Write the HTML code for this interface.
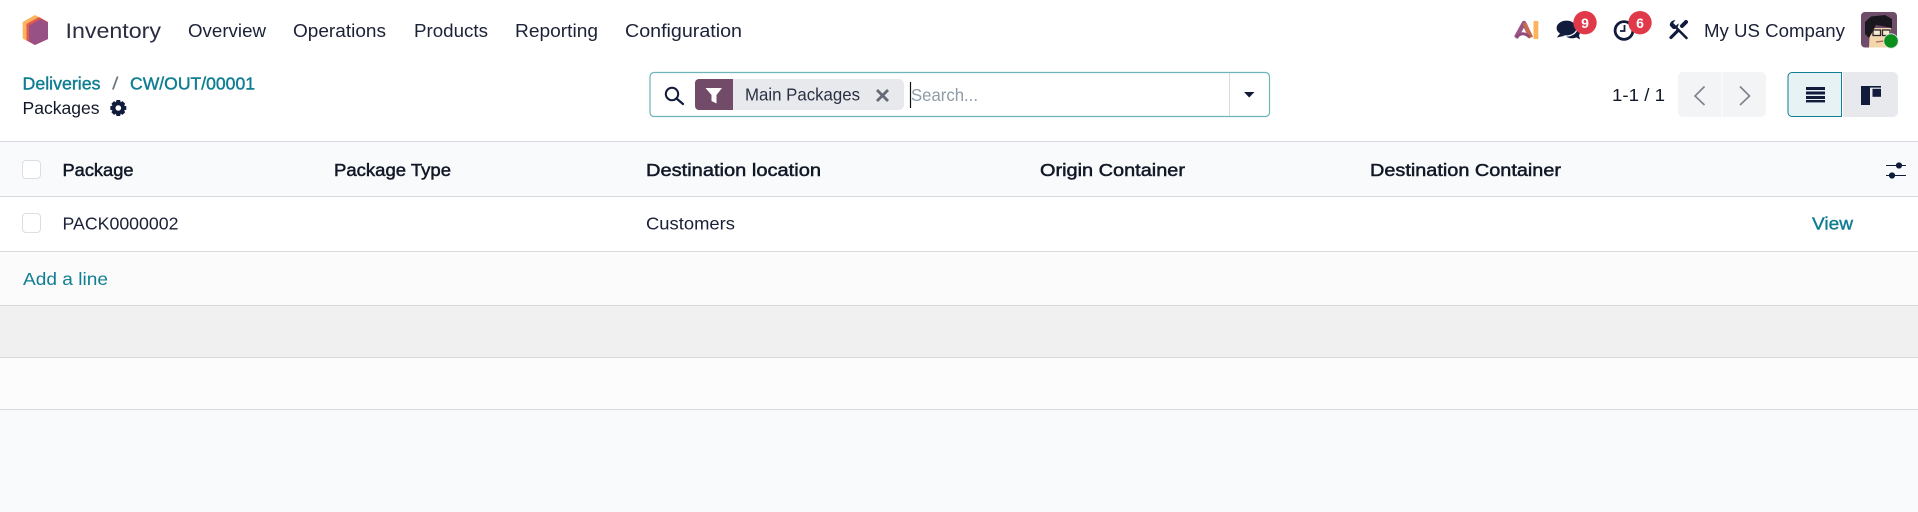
<!DOCTYPE html>
<html lang="en">
<head>
<meta charset="utf-8">
<title>Inventory - Packages</title>
<style>
html,body{margin:0;padding:0;width:1918px;height:512px;overflow:hidden;background:#f9fafb}
svg{display:block}
text{font-family:"Liberation Sans",sans-serif;fill:#1b2136;white-space:pre}
.nav{font-size:18.6px}
.b{font-size:17.6px;fill:#111827}
.th{font-size:17.8px;fill:#111827;stroke:#111827;stroke-width:.5px}
.lnk{font-size:17.6px;fill:#0f7d92;stroke:#0f7d92;stroke-width:.4px}
</style>
</head>
<body>
<svg width="1918" height="512" viewBox="0 0 1918 512" xmlns="http://www.w3.org/2000/svg">
<rect width="1918" height="512" fill="#f9fafb"/>
<rect width="1918" height="141" fill="#fff"/>

<!-- logo -->
<polygon points="35,15 48,22 48,39 35,45 22.7,38.5 22.7,22" fill="#fbb45c"/>
<polygon points="26.5,24 39,17 48,22 48,39 35,45 26.5,40.5" fill="#e2574f"/>
<polygon points="29,25.5 41,19 48,22.5 48,39 35,45 29,41.5" fill="#985184"/>

<!-- top nav -->
<text x="65.5" y="38" font-size="21.6" textLength="95.5" lengthAdjust="spacingAndGlyphs" style="fill:#2a2c3f">Inventory</text>
<text class="nav" x="188" y="37" textLength="78" lengthAdjust="spacingAndGlyphs">Overview</text>
<text class="nav" x="293" y="37" textLength="93" lengthAdjust="spacingAndGlyphs">Operations</text>
<text class="nav" x="414" y="37" textLength="74" lengthAdjust="spacingAndGlyphs">Products</text>
<text class="nav" x="515" y="37" textLength="83" lengthAdjust="spacingAndGlyphs">Reporting</text>
<text class="nav" x="625" y="37" textLength="117" lengthAdjust="spacingAndGlyphs">Configuration</text>

<!-- AI icon -->
<path d="M1516 37.5 L1524 23 L1531 37.5" fill="none" stroke="#9a5586" stroke-width="4.4" stroke-linejoin="round"/>
<path d="M1524.5 23 L1531 37.5" fill="none" stroke="#c96a4a" stroke-width="3.8"/>
<path d="M1516 38 Q1522 30 1529.5 37" fill="none" stroke="#8f4d7d" stroke-width="3"/>
<rect x="1533.5" y="21" width="4.8" height="18" fill="#fbb45c"/>

<!-- chat icon -->
<ellipse cx="1572" cy="32.5" rx="8" ry="5.8" fill="#111b3c"/>
<path d="M1574 36 L1580 39.5 L1578.5 33Z" fill="#111b3c"/>
<ellipse cx="1566.5" cy="28" rx="10.5" ry="8" fill="#111b3c" stroke="#fff" stroke-width="1.2"/>
<path d="M1560 33.5 L1556.8 37.5 L1565 35.8Z" fill="#111b3c"/>
<circle cx="1585" cy="22.7" r="11.7" fill="#e03a4a"/>
<text x="1585" y="28" font-size="14" font-weight="bold" text-anchor="middle" style="fill:#fff">9</text>

<!-- clock icon -->
<circle cx="1624" cy="30.5" r="8.9" fill="none" stroke="#111b3c" stroke-width="2.8"/>
<path d="M1624.5 25v6h-4.5" fill="none" stroke="#111b3c" stroke-width="1.8"/>
<circle cx="1640" cy="22.7" r="11.7" fill="#e03a4a"/>
<text x="1640" y="28" font-size="14" font-weight="bold" text-anchor="middle" style="fill:#fff">6</text>

<!-- tools icon -->
<path d="M1672.5 24 L1686.5 38" stroke="#111b3c" stroke-width="2.6" stroke-linecap="round"/>
<path d="M1669.8 25.5 A5 5 0 0 1 1675.5 20.3 L1672.8 23.3 L1673.5 25.5 L1675.5 26 L1678.5 23.4 A5 5 0 0 1 1673 29Z" fill="#111b3c"/>
<path d="M1671 37.5 L1678 30.5" stroke="#111b3c" stroke-width="3.2" stroke-linecap="round"/>
<path d="M1682 26 L1686 22" stroke="#111b3c" stroke-width="4" stroke-linecap="round"/>

<text class="nav" x="1704" y="37" textLength="141" lengthAdjust="spacingAndGlyphs">My US Company</text>

<!-- avatar -->
<rect x="1861" y="12" width="36" height="35.5" rx="4" fill="#6f4c6a"/>
<path d="M1869 47.5 L1870 28 L1891 28 L1891 47.5Z" fill="#f4d6ac"/>
<path d="M1865 34 L1865 22 L1871 16.5 L1885 15 L1892 19 L1892 28 L1887 27 L1876 25 L1873 31 L1869 38Z" fill="#1b171f"/>
<rect x="1873" y="30" width="7.5" height="5.5" fill="#f8ead2" stroke="#2c2a2e" stroke-width="1.3"/>
<rect x="1882.5" y="30" width="7.5" height="5.5" fill="#f8ead2" stroke="#2c2a2e" stroke-width="1.3"/>
<path d="M1876 42 L1884 41" stroke="#a8675a" stroke-width="1.2"/>
<circle cx="1891" cy="41" r="7.6" fill="#dfe3e8"/>
<circle cx="1891" cy="41" r="6.8" fill="#0a8f1c"/>

<!-- breadcrumb -->
<text class="lnk" x="22.5" y="89.5" textLength="78" lengthAdjust="spacingAndGlyphs">Deliveries</text>
<text x="112" y="89.5" font-size="17.6" textLength="6.5" lengthAdjust="spacingAndGlyphs" style="fill:#6b7280">/</text>
<text class="lnk" x="130" y="89.5" textLength="125" lengthAdjust="spacingAndGlyphs">CW/OUT/00001</text>
<text class="b" x="22.5" y="114" textLength="77" lengthAdjust="spacingAndGlyphs">Packages</text>
<!-- gear -->
<path fill="#111b3c" fill-rule="evenodd" d="M116.5 100 H120.1 L120.7 102.2 L122.6 101.1 L125.2 103.7 L124.1 105.6 L126.3 106.2 V109.8 L124.1 110.4 L125.2 112.3 L122.6 114.9 L120.7 113.8 L120.1 116 H116.5 L115.9 113.8 L114 114.9 L111.4 112.3 L112.5 110.4 L110.3 109.8 V106.2 L112.5 105.6 L111.4 103.7 L114 101.1 L115.9 102.2Z M118.3 105.2 A2.8 2.8 0 1 0 118.31 105.2Z"/>

<!-- search box -->
<rect x="650" y="72.5" width="619.5" height="44" rx="4" fill="#fff" stroke="#6db3b8" stroke-width="1.2"/>
<line x1="1229.5" y1="73" x2="1229.5" y2="116" stroke="#d8dadd"/>
<circle cx="672" cy="94" r="6.2" fill="none" stroke="#111b3c" stroke-width="2"/>
<path d="M676.5 98.5 L683 104" stroke="#111b3c" stroke-width="2.2" stroke-linecap="round"/>
<path d="M699 79 H899 a5 5 0 0 1 5 5 V105 a5 5 0 0 1 -5 5 H699Z" fill="#e7e9ed"/>
<path d="M733 79 H699 a4 4 0 0 0 -4 4 V106 a4 4 0 0 0 4 4 H733Z" fill="#714b67"/>
<path d="M705.5 88 H722 L716.5 95 V103.5 L711.5 101 V95Z" fill="#fff"/>
<text x="745" y="100.5" font-size="17.6" textLength="115" lengthAdjust="spacingAndGlyphs" style="fill:#2a3042">Main Packages</text>
<path d="M877 90 L888 101 M888 90 L877 101" stroke="#646b76" stroke-width="2.8"/>
<line x1="910.5" y1="82" x2="910.5" y2="108" stroke="#111" stroke-width="1.2"/>
<text x="911" y="101" font-size="17.6" textLength="67" lengthAdjust="spacingAndGlyphs" style="fill:#8f9ba5">Search...</text>
<path d="M1244 92 H1254.5 L1249.2 97.5Z" fill="#111b3c"/>

<!-- pager -->
<text class="b" x="1612" y="101" textLength="53" lengthAdjust="spacingAndGlyphs">1-1 / 1</text>
<rect x="1678" y="72" width="88" height="45" rx="5" fill="#f3f4f6"/>
<line x1="1722" y1="72" x2="1722" y2="117" stroke="#fff"/>
<path d="M1704.5 86.5 L1695 96 L1704.5 105" fill="none" stroke="#7b818b" stroke-width="1.6"/>
<path d="M1740 86.5 L1749.5 96 L1740 105" fill="none" stroke="#7b818b" stroke-width="1.6"/>

<!-- view switch -->
<path d="M1792 72.5 H1841.5 V116.5 H1792 a4 4 0 0 1 -4 -4 V76.5 a4 4 0 0 1 4 -4Z" fill="#e6f2f4" stroke="#0f7d92"/>
<path d="M1843 72 H1893 a5 5 0 0 1 5 5 V112 a5 5 0 0 1 -5 5 H1843Z" fill="#e7e9ed"/>
<rect x="1806" y="87" width="19" height="3" fill="#111b3c"/>
<rect x="1806" y="91.5" width="19" height="3" fill="#111b3c"/>
<rect x="1806" y="96" width="19" height="3" fill="#111b3c"/>
<rect x="1806" y="100" width="19" height="2.4" fill="#111b3c"/>
<rect x="1861" y="86" width="20" height="1.6" fill="#111b3c"/>
<rect x="1861" y="86" width="9" height="19" fill="#111b3c"/>
<rect x="1872.5" y="88.8" width="8.5" height="8" fill="#111b3c"/>

<!-- table -->
<rect x="0" y="142" width="1918" height="54" fill="#f9fafb"/>
<rect x="0" y="197" width="1918" height="54" fill="#fff"/>
<rect x="0" y="252" width="1918" height="53" fill="#fbfbfc"/>
<rect x="0" y="306" width="1918" height="51" fill="#f0f0f0"/>
<rect x="0" y="358" width="1918" height="51" fill="#fcfcfc"/>
<g fill="#d8dadd">
<rect y="141" width="1918" height="1"/>
<rect y="196" width="1918" height="1"/>
<rect y="251" width="1918" height="1"/>
<rect y="305" width="1918" height="1"/>
<rect y="357" width="1918" height="1"/>
<rect y="409" width="1918" height="1"/>
</g>

<rect x="22.5" y="160.5" width="18" height="18" rx="3.5" fill="#fff" stroke="#dcdee1"/>
<rect x="22.5" y="213.5" width="18" height="19" rx="3.5" fill="#fff" stroke="#dcdee1"/>

<text class="th" x="62.5" y="176" textLength="71" lengthAdjust="spacingAndGlyphs">Package</text>
<text class="th" x="334" y="176" textLength="117" lengthAdjust="spacingAndGlyphs">Package Type</text>
<text class="th" x="646" y="176" textLength="175" lengthAdjust="spacingAndGlyphs">Destination location</text>
<text class="th" x="1040" y="176" textLength="145" lengthAdjust="spacingAndGlyphs">Origin Container</text>
<text class="th" x="1370" y="176" textLength="191" lengthAdjust="spacingAndGlyphs">Destination Container</text>

<!-- optional columns icon -->
<path d="M1886 165.5 H1906 M1886 175.5 H1906" stroke="#111b3c" stroke-width="1.1"/>
<circle cx="1899" cy="165.5" r="3.1" fill="#111b3c"/>
<circle cx="1892" cy="175.5" r="3.1" fill="#111b3c"/>

<text class="b" x="62.5" y="229.5" textLength="116" lengthAdjust="spacingAndGlyphs" style="fill:#1b2136">PACK0000002</text>
<text class="b" x="646" y="229.5" textLength="89" lengthAdjust="spacingAndGlyphs" style="fill:#1b2136">Customers</text>
<text class="lnk" x="1812" y="229.5" textLength="41" lengthAdjust="spacingAndGlyphs">View</text>
<text x="23" y="285" font-size="17.6" textLength="85" lengthAdjust="spacingAndGlyphs" style="fill:#0f7d92">Add a line</text>
</svg>
</body>
</html>
